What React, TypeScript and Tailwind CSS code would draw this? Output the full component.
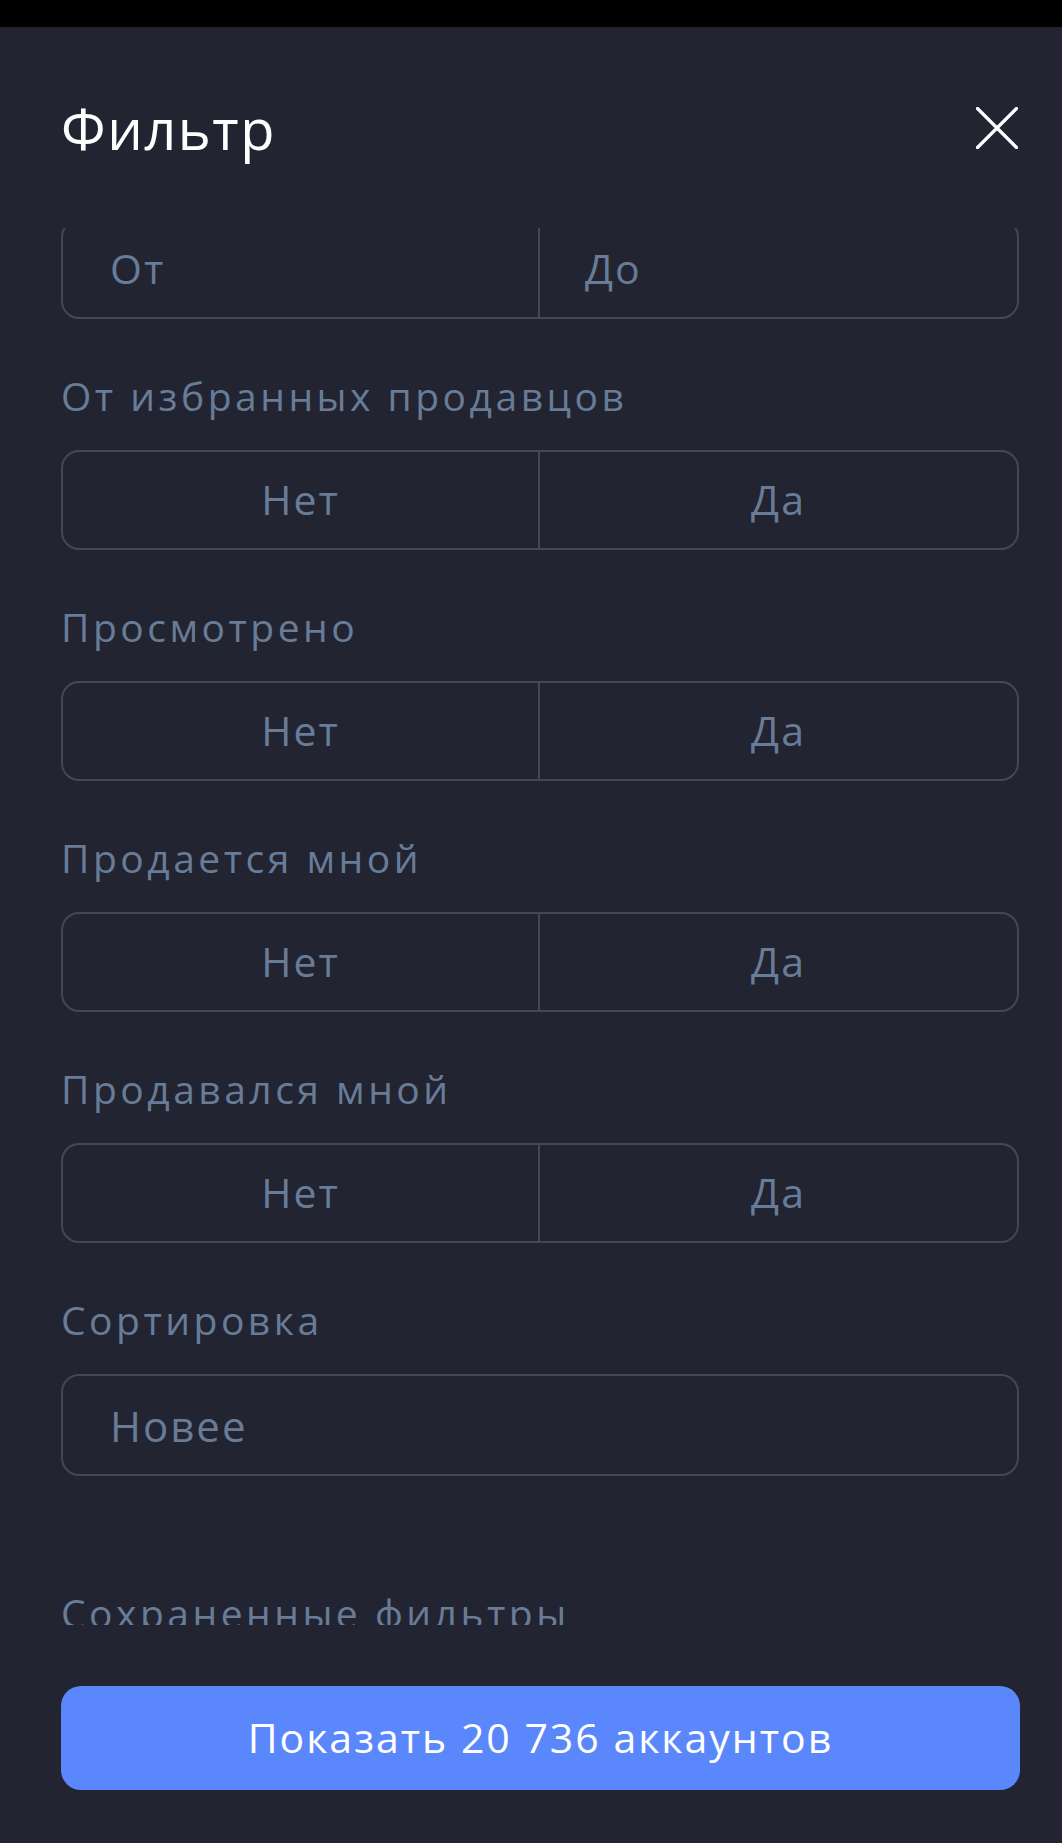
const font = { fontFamily: '"Open Sans", "Noto Sans", sans-serif' }

function Label({ text }: { text: string }) {
  return (
    <div className="h-[36px] text-[39px] leading-[36px] tracking-[3.5px] text-[#687c98]">
      {text}
    </div>
  )
}

function Toggle() {
  return (
    <div className="grid h-[100px] grid-cols-2 rounded-[18px] border-2 border-[#46474f]">
      <div className="flex items-center justify-center border-r-2 border-[#46474f] text-[41px] tracking-[2px] text-[#687c98]">
        Нет
      </div>
      <div className="flex items-center justify-center text-[41px] tracking-[2px] text-[#687c98]">
        Да
      </div>
    </div>
  )
}

function Section({ label }: { label: string }) {
  return (
    <div className="mt-[59px] flex flex-col gap-[36px]">
      <Label text={label} />
      <Toggle />
    </div>
  )
}

export default function App() {
  return (
    <div className="flex min-h-[1843px] w-full flex-col bg-[#222431]" style={font}>
      <div className="h-[27px] bg-black" />

      {/* header */}
      <div className="flex h-[201px] items-center justify-between pl-[61px] pr-[44px]">
        <h1 className="text-[56px] font-medium tracking-[1.5px] text-white">Фильтр</h1>
        <svg width="42" height="42" viewBox="0 0 42 42" fill="none" stroke="white" strokeWidth="3.2" strokeLinecap="round">
          <path d="M1.5 1.5 40.5 40.5M40.5 1.5 1.5 40.5" />
        </svg>
      </div>

      {/* scroll area */}
      <div className="h-[1397px] overflow-hidden pl-[61px] pr-[43px]">
        <div className="-mt-[9px] flex flex-col">
          <div className="grid h-[100px] grid-cols-2 rounded-[18px] border-2 border-[#46474f]">
            <div className="flex items-center border-r-2 border-[#46474f] pl-[47px] text-[41px] tracking-[2px] text-[#687c98]">
              От
            </div>
            <div className="flex items-center pl-[45px] text-[41px] tracking-[2px] text-[#687c98]">
              До
            </div>
          </div>

          <Section label="От избранных продавцов" />
          <Section label="Просмотрено" />
          <Section label="Продается мной" />
          <Section label="Продавался мной" />

          <div className="mt-[59px] flex flex-col gap-[36px]">
            <Label text="Сортировка" />
            <div className="flex h-[102px] items-center rounded-[18px] border-2 border-[#46474f] pl-[47px] text-[42px] tracking-[2px] text-[#687c98]">
              Новее
            </div>
          </div>

          <div className="mt-[119px]">
            <Label text="Сохраненные фильтры" />
          </div>
        </div>
      </div>

      {/* footer */}
      <div className="pl-[61px] pr-[42px] pt-[61px]">
        <button className="flex h-[104px] w-full items-center justify-center rounded-[20px] bg-[#5b87fc] text-[41px] font-medium tracking-[2px] text-white">
          Показать 20 736 аккаунтов
        </button>
      </div>
    </div>
  )
}
